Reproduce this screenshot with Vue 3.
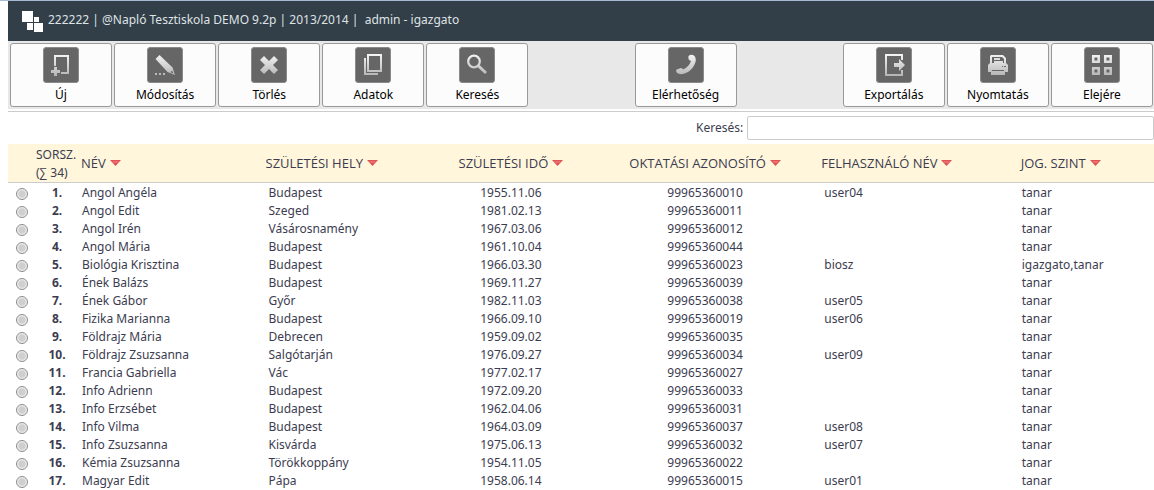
<script setup>
import { ref } from 'vue'

const search = ref('')
const selected = ref(null)

const tools = [
  { icon: 'new', label: 'Új', place: 'c1' },
  { icon: 'edit', label: 'Módosítás', place: 'c2' },
  { icon: 'delete', label: 'Törlés', place: 'c3' },
  { icon: 'data', label: 'Adatok', place: 'c4' },
  { icon: 'search', label: 'Keresés', place: 'c5' },
  { icon: 'phone', label: 'Elérhetőség', place: 'c7' },
  { icon: 'export', label: 'Exportálás', place: 'c9' },
  { icon: 'print', label: 'Nyomtatás', place: 'c10' },
  { icon: 'home', label: 'Elejére', place: 'c11' },
]

const columns = [
  { key: 'name', label: 'NÉV' },
  { key: 'city', label: 'SZÜLETÉSI HELY' },
  { key: 'born', label: 'SZÜLETÉSI IDŐ' },
  { key: 'code', label: 'OKTATÁSI AZONOSÍTÓ' },
  { key: 'user', label: 'FELHASZNÁLÓ NÉV' },
  { key: 'role', label: 'JOG. SZINT' },
]

const rows = [
  ['Angol Angéla', 'Budapest', '1955.11.06', '99965360010', 'user04', 'tanar'],
  ['Angol Edit', 'Szeged', '1981.02.13', '99965360011', '', 'tanar'],
  ['Angol Irén', 'Vásárosnamény', '1967.03.06', '99965360012', '', 'tanar'],
  ['Angol Mária', 'Budapest', '1961.10.04', '99965360044', '', 'tanar'],
  ['Biológia Krisztina', 'Budapest', '1966.03.30', '99965360023', 'biosz', 'igazgato,tanar'],
  ['Ének Balázs', 'Budapest', '1969.11.27', '99965360039', '', 'tanar'],
  ['Ének Gábor', 'Győr', '1982.11.03', '99965360038', 'user05', 'tanar'],
  ['Fizika Marianna', 'Budapest', '1966.09.10', '99965360019', 'user06', 'tanar'],
  ['Földrajz Mária', 'Debrecen', '1959.09.02', '99965360035', '', 'tanar'],
  ['Földrajz Zsuzsanna', 'Salgótarján', '1976.09.27', '99965360034', 'user09', 'tanar'],
  ['Francia Gabriella', 'Vác', '1977.02.17', '99965360027', '', 'tanar'],
  ['Info Adrienn', 'Budapest', '1972.09.20', '99965360033', '', 'tanar'],
  ['Info Erzsébet', 'Budapest', '1962.04.06', '99965360031', '', 'tanar'],
  ['Info Vilma', 'Budapest', '1964.03.09', '99965360037', 'user08', 'tanar'],
  ['Info Zsuzsanna', 'Kisvárda', '1975.06.13', '99965360032', 'user07', 'tanar'],
  ['Kémia Zsuzsanna', 'Törökkoppány', '1954.11.05', '99965360022', '', 'tanar'],
  ['Magyar Edit', 'Pápa', '1958.06.14', '99965360015', 'user01', 'tanar'],
]
</script>

<template>
  <div class="page">
    <header class="topbar">
      <svg class="logo" width="22" height="22" viewBox="0 0 22 22" aria-hidden="true">
        <path d="M0 0h11v11H0zM12 6h5v5h-5zM5 12h6v7H5zM12 12h9v9h-9z" fill="#fff" />
      </svg>
      <span>222222 | @Napló Tesztiskola DEMO 9.2p | 2013/2014 |&nbsp; admin - igazgato</span>
    </header>

    <nav class="toolbar">
      <button v-for="t in tools" :key="t.icon" type="button" class="tool" :class="t.place">
        <svg class="tile" width="36" height="36" viewBox="0 0 36 36" aria-hidden="true">
          <defs>
            <linearGradient :id="'shade-' + t.icon" gradientUnits="userSpaceOnUse" x1="0" y1="7" x2="0" y2="29">
              <stop offset="0" stop-color="#f6f6f6" />
              <stop offset="1" stop-color="#b4b4b4" />
            </linearGradient>
          </defs>
          <rect x="0.5" y="0.5" width="35" height="35" rx="2.5" fill="#666" stroke="#8a8a8a" />
          <g v-if="t.icon === 'new'" :stroke="`url(#shade-${t.icon})`" fill="none">
            <path d="M12 19V9H25V26H18" stroke-width="2" />
            <path d="M12.500 20V29M8 24.500H17" stroke-width="3" />
          </g>
          <g v-else-if="t.icon === 'edit'" :fill="`url(#shade-${t.icon})`">
            <path d="M8.500 12L12.500 8L25.500 20.500L28 28L20.500 25Z" />
            <path d="M25 23.500L26.500 26.500L23.500 25.200Z" fill="#666" />
            <path d="M8 26h2v2H8zM12 26h2v2h-2zM16 26h2v2h-2z" />
          </g>
          <path v-else-if="t.icon === 'delete'" :fill="`url(#shade-${t.icon})`"
            d="M13 9L18 14L23 9L27 13L22 18L27 23L23 27L18 22L13 27L9 23L14 18L9 13Z" />
          <g v-else-if="t.icon === 'data'" :stroke="`url(#shade-${t.icon})`" fill="none" stroke-width="2">
            <rect x="13" y="8" width="13" height="16" />
            <path d="M10 11V27H23" />
          </g>
          <g v-else-if="t.icon === 'search'" :stroke="`url(#shade-${t.icon})`" fill="none">
            <circle cx="15" cy="14.500" r="5.800" stroke-width="2.200" />
            <path d="M19 18.500L27 26" stroke-width="3" />
          </g>
          <path v-else-if="t.icon === 'phone'" :fill="`url(#shade-${t.icon})`"
            d="M20.500 9Q23 7 26 8.500Q28.500 11 27.500 15Q25.500 22 19 25.500Q13 28.500 9 26Q7.500 24 8.500 22.500L13 21Q14.500 21 15 22.500Q21 20 23 14L21 13Q20 11 20.500 9Z" />
          <g v-else-if="t.icon === 'export'">
            <path :stroke="`url(#shade-${t.icon})`" stroke-width="2" fill="none" d="M26 13V8H10V28H26V23" />
            <path :fill="`url(#shade-${t.icon})`" d="M18 16h5v-4l6 6l-6 6v-4h-5z" />
          </g>
          <g v-else-if="t.icon === 'print'">
            <path :fill="`url(#shade-${t.icon})`" d="M11 8H23L26 11V16L28 18V25H25V28H11V25H8V18L10 16V9Z" />
            <path d="M13 10H22L24 12V16H12V10Z" fill="#666" />
            <path d="M14 11h6v2h-6zM14 14h9v2h-9z" fill="#ddd" />
            <path d="M12 23h12v1H12zM22 19h1v1h-1zM24 19h2v1h-2z" fill="#666" />
          </g>
          <g v-else :stroke="`url(#shade-${t.icon})`" fill="none" stroke-width="2.500">
            <path d="M9.200 9.200h5.500v5.500h-5.500zM21.200 9.200h5.500v5.500h-5.500zM9.200 21.200h5.500v5.500h-5.500zM21.200 21.200h5.500v5.500h-5.500z" />
          </g>
        </svg>
        <span>{{ t.label }}</span>
      </button>
    </nav>

    <div class="search">
      <label for="search">Keresés:</label>
      <input id="search" v-model="search" type="text" />
    </div>

    <table class="list">
      <colgroup>
        <col class="w-pick" />
        <col class="w-no" />
        <col v-for="c in columns" :key="c.key" :class="'w-' + c.key" />
      </colgroup>
      <thead>
        <tr>
          <th></th>
          <th class="no-head">SORSZ.<br />(∑ 34)</th>
          <th v-for="c in columns" :key="c.key" :class="c.key">
            <button type="button" class="sort">
              <span>{{ c.label }}</span>
              <svg width="11" height="8" viewBox="0 0 11 8" aria-hidden="true">
                <path d="M0 1H11L5.500 7Z" fill="#e05252" />
                <path d="M2 2H9L7 4H4Z" fill="#e97070" />
              </svg>
            </button>
          </th>
        </tr>
      </thead>
      <tbody>
        <tr v-for="(r, i) in rows" :key="r[3]">
          <td class="pick">
            <input v-model="selected" type="radio" name="person" :value="r[3]" :aria-label="r[0]" />
          </td>
          <td class="no">{{ i + 1 }}.</td>
          <td v-for="(c, j) in columns" :key="c.key" :class="c.key">{{ r[j] }}</td>
        </tr>
      </tbody>
    </table>
  </div>
</template>

<style>
body {
  background: #fff;
}
</style>

<style scoped>
.page {
  padding-left: 8px;
  border-top: 1px solid #a5b9d0;
  font: 12px/18px "Noto Sans", "Open Sans", sans-serif;
  color: #3c3c50;
}
button,
input {
  font: inherit;
  color: inherit;
}
.topbar {
  display: flex;
  gap: 4px;
  height: 40px;
  padding: 10px 14px 0;
  box-sizing: border-box;
  background: #323e48;
  color: #dfe3e6;
  white-space: nowrap;
}
.logo {
  flex: none;
}
.toolbar {
  display: grid;
  grid-template-columns: repeat(11, 1fr);
  gap: 2px;
  padding: 2px 1px 2px 2px;
  background: #e8e8e8;
}
.tool {
  display: flex;
  flex-direction: column;
  align-items: center;
  gap: 3px;
  min-width: 0;
  height: 64px;
  padding: 3px 0 0;
  border: 1px solid #999;
  border-radius: 3px;
  background: #fcfcfc;
  color: #000;
}
.tile {
  flex: none;
}
.c1 { grid-column: 1; }
.c2 { grid-column: 2; }
.c3 { grid-column: 3; }
.c4 { grid-column: 4; }
.c5 { grid-column: 5; }
.c7 { grid-column: 7; }
.c9 { grid-column: 9; }
.c10 { grid-column: 10; }
.c11 { grid-column: 11; }
.search {
  display: flex;
  justify-content: flex-end;
  align-items: center;
  gap: 4px;
  margin-top: 2px;
  padding: 4px 0;
  border-top: 1px solid #ccc;
}
.search input {
  width: 35.5%;
  height: 24px;
  box-sizing: border-box;
  border: 1px solid #ccc;
  border-radius: 2px;
  background: #fff;
}
.list {
  width: 100%;
  table-layout: fixed;
  border-collapse: collapse;
}
.w-pick { width: 28px; }
.w-no { width: 44px; }
.w-name { width: 16.1%; }
.w-city { width: 14.6%; }
.w-born { width: 13.8%; }
.w-code { width: 20.1%; }
.w-user { width: 17.4%; }
.w-role { width: auto; }
th {
  height: 38px;
  padding: 0 0 0 1px;
  border-bottom: 1px solid #ccc;
  background: #fff6dc;
  font-weight: normal;
  text-align: left;
  white-space: nowrap;
}
th.no-head {
  padding: 1px 0 0;
  height: 37px;
}
td {
  height: 16px;
  padding: 2px 0 0 2px;
  line-height: 16px;
  white-space: nowrap;
}
td.city,
td.user {
  padding-left: 4px;
}
th.born,
th.code,
td.born,
td.code {
  padding-left: 0;
  text-align: center;
}
.sort {
  display: inline-flex;
  align-items: center;
  gap: 4px;
  padding: 0;
  border: 0;
  background: none;
  font-family: "Open Sans", "Noto Sans", sans-serif;
  font-size: 13px;
}
td.no {
  padding: 2px 2px 0 0;
  font-weight: bold;
  text-align: center;
}
td.pick {
  padding: 0;
  text-align: center;
}
.pick input {
  display: block;
  appearance: none;
  width: 12px;
  height: 12px;
  margin: 4px auto 0;
  border: 1px solid #8c8c8c;
  border-radius: 50%;
  background: radial-gradient(circle, #cfcfcf 0 3px, #f4f4f4 5px);
}
.pick input:checked {
  background: radial-gradient(circle, #333 0 2px, #f4f4f4 4px);
}
</style>
